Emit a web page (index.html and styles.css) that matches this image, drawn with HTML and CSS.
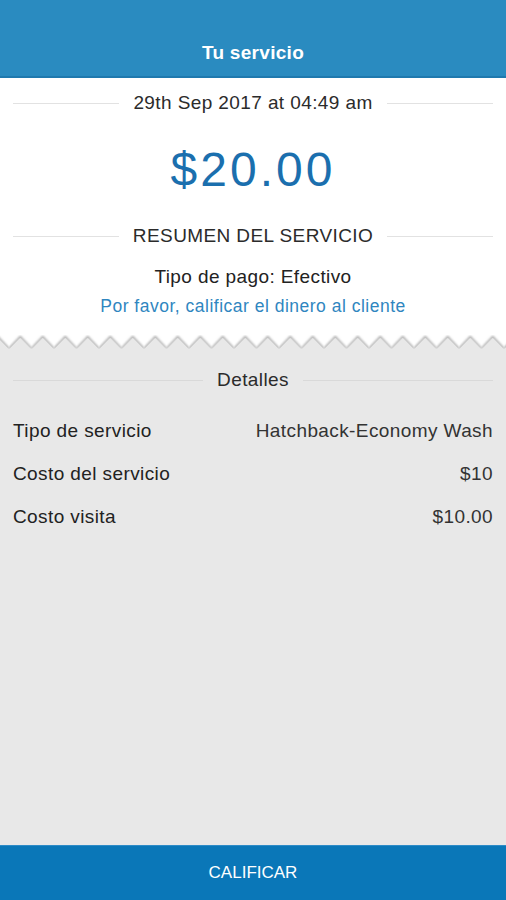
FILE: index.html
```html
<!DOCTYPE html>
<html lang="es">
<head>
  <meta charset="UTF-8" />
  <title>Tu servicio</title>
  <link rel="stylesheet" href="styles.css">
</head>
<body>
  <div class="app">
    <div class="header">Tu servicio</div>

    <div class="receipt">
      <div class="divider"><span>29th Sep 2017 at 04:49 am</span></div>
      <div class="amount">$20.00</div>
      <div class="divider summary"><span>RESUMEN DEL SERVICIO</span></div>
      <p class="pay-type">Tipo de pago: Efectivo</p>
      <p class="note">Por favor, calificar el dinero al cliente</p>
    </div>

    <!-- torn paper edge -->
    <svg class="zigzag" width="100%" height="16">
      <defs>
        <filter id="soft" x="-10%" y="-50%" width="120%" height="200%">
          <feGaussianBlur stdDeviation="0.9" />
        </filter>
        <pattern id="teeth" x="9" y="0" width="22.5" height="16" patternUnits="userSpaceOnUse">
          <path d="M0 14 L11.25 2 L22.5 14" fill="none" stroke="#a6a6a6" stroke-width="2" filter="url(#soft)" />
          <path d="M-0.5 14.8 L11.25 2.8 L23 14.8 V16 H-0.5 Z" fill="#e8e8e8" />
        </pattern>
      </defs>
      <rect width="100%" height="16" fill="url(#teeth)" />
    </svg>

    <div class="details">
      <div class="divider"><span>Detalles</span></div>
      <div class="row"><span>Tipo de servicio</span><span class="value">Hatchback-Economy Wash</span></div>
      <div class="row"><span>Costo del servicio</span><span class="value">$10</span></div>
      <div class="row"><span>Costo visita</span><span class="value">$10.00</span></div>
    </div>

    <button class="rate-btn">CALIFICAR</button>
  </div>
</body>
</html>
```

FILE: styles.css
```css
* { box-sizing: border-box; }

body {
  margin: 0;
  font-family: "Liberation Sans", Arial, sans-serif;
  background: #e8e8e8;
  color: #222;
}

.app {
  display: flex;
  flex-direction: column;
  height: 900px;
}

.header {
  height: 78px;
  background: #2a8bc0;
  border-bottom: 2px solid #1f79ae;
  color: #fff;
  font-weight: bold;
  font-size: 19px;
  letter-spacing: 0.3px;
  display: flex;
  align-items: flex-end;
  justify-content: center;
  padding-bottom: 12px;
}

.receipt {
  background: #fff;
  padding: 14px 13px 19px;
  text-align: center;
}

.divider {
  display: flex;
  align-items: center;
  gap: 14px;
  font-size: 19px;
  letter-spacing: 0.4px;
  line-height: 22px;
  color: #2b2b2b;
}

.divider::before,
.divider::after {
  content: "";
  flex: 1;
  height: 1px;
  background: #e2e2e2;
}

.amount {
  font-size: 48px;
  letter-spacing: 3px;
  color: #1b6fae;
  margin: 32px 0 31px;
  line-height: 1;
}

.pay-type {
  margin: 19px 0 0;
  font-size: 19px;
  letter-spacing: 0.4px;
  line-height: 22px;
  color: #222;
}

.note {
  margin: 8px 0 0;
  font-size: 17.5px;
  letter-spacing: 0.5px;
  line-height: 20px;
  color: #2f86c0;
}

.zigzag {
  display: block;
  background: #fff;
}

.details {
  flex: 1;
  padding: 18px 13px 0;
}

.details .divider::before,
.details .divider::after {
  background: #d9d9d9;
}

.row {
  display: flex;
  justify-content: space-between;
  align-items: center;
  height: 43px;
  font-size: 19px;
  letter-spacing: 0.4px;
  color: #222;
}

.details .divider + .row {
  margin-top: 18px;
}

.value {
  color: #333;
}

.rate-btn {
  height: 55px;
  border: none;
  border-top: 1px solid #2d8bc7;
  background: #0a77b8;
  color: #fff;
  font-family: inherit;
  font-size: 17px;
  width: 100%;
}
```
